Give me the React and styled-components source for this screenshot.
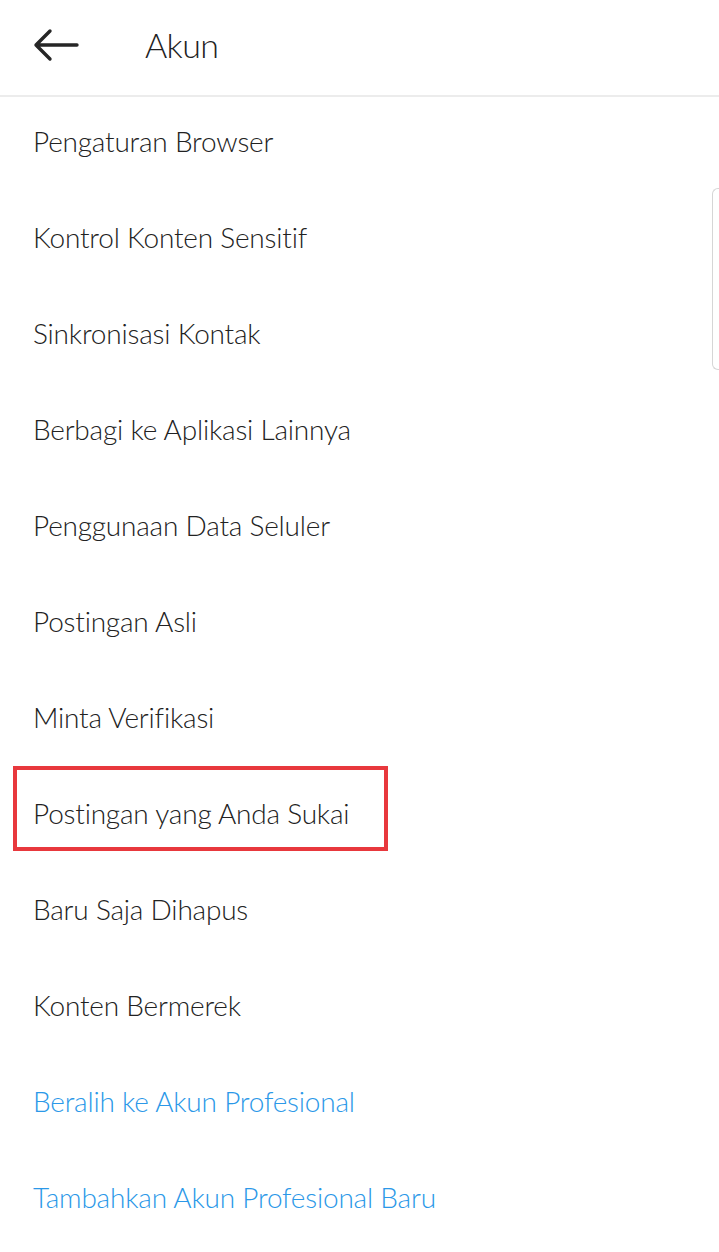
import styled, { createGlobalStyle } from 'styled-components'

const GlobalStyle = createGlobalStyle`
  html, body {
    margin: 0;
    padding: 0;
    background: #ffffff;
  }
  body {
    font-family: Lato, "Open Sans", sans-serif;
    -webkit-font-smoothing: antialiased;
  }
`

const items = [
  { label: 'Pengaturan Browser' },
  { label: 'Kontrol Konten Sensitif' },
  { label: 'Sinkronisasi Kontak' },
  { label: 'Berbagi ke Aplikasi Lainnya' },
  { label: 'Penggunaan Data Seluler' },
  { label: 'Postingan Asli' },
  { label: 'Minta Verifikasi' },
  { label: 'Postingan yang Anda Sukai', marked: true },
  { label: 'Baru Saja Dihapus' },
  { label: 'Konten Bermerek' },
  { label: 'Beralih ke Akun Profesional', link: true },
  { label: 'Tambahkan Akun Profesional Baru', link: true },
]

export default function App() {
  return (
    <Screen>
      <GlobalStyle />
      <Header>
        <BackButton aria-label="Kembali">
          <svg width="46" height="36" viewBox="0 0 46 36" fill="none">
            <path d="M44 18H3M17 4L3 18l14 14" stroke="#262626" strokeWidth="3.4" strokeLinecap="round" strokeLinejoin="round" />
          </svg>
        </BackButton>
        <Title>Akun</Title>
      </Header>
      <List>
        {items.map(item => (
          <Row key={item.label}>
            <Label $link={item.link}>{item.label}</Label>
            {item.marked && <Highlight />}
          </Row>
        ))}
      </List>
      <ScrollHint />
    </Screen>
  )
}

const Screen = styled.div`
  position: relative;
  width: 719px;
  height: 1252px;
  overflow: hidden;
  background: #fff;
`
const Header = styled.header`
  display: flex;
  align-items: center;
  height: 97px;
  border-bottom: 2px solid #ececec;
  box-sizing: border-box;
  padding-bottom: 6px;
`
const BackButton = styled.button`
  display: flex;
  align-items: center;
  justify-content: center;
  margin-left: 33px;
  padding: 0;
  border: none;
  background: transparent;
`
const Title = styled.h1`
  margin: 0 0 0 66px;
  font-family: Lato, sans-serif;
  font-weight: 300;
  font-size: 34px;
  letter-spacing: -0.6px;
  color: #222;
`
const List = styled.ul`
  list-style: none;
  margin: 0;
  padding: 0;
`
const Row = styled.li`
  position: relative;
  display: flex;
  align-items: center;
  height: 96px;
  padding: 0 0 8px 33px;
  box-sizing: border-box;
`
const Label = styled.span`
  font-weight: 300;
  font-size: 28px;
  letter-spacing: -0.2px;
  color: ${({ $link }) => ($link ? '#2b98e8' : '#222')};
`
const Highlight = styled.div`
  position: absolute;
  left: 13px;
  top: -3px;
  width: 375px;
  height: 85px;
  border: 4px solid #e8383d;
  box-sizing: border-box;
`
const ScrollHint = styled.div`
  position: absolute;
  right: 0;
  top: 188px;
  width: 6px;
  height: 180px;
  border: 1px solid #d6d6d6;
  border-right: none;
  border-radius: 6px 0 0 6px;
`
